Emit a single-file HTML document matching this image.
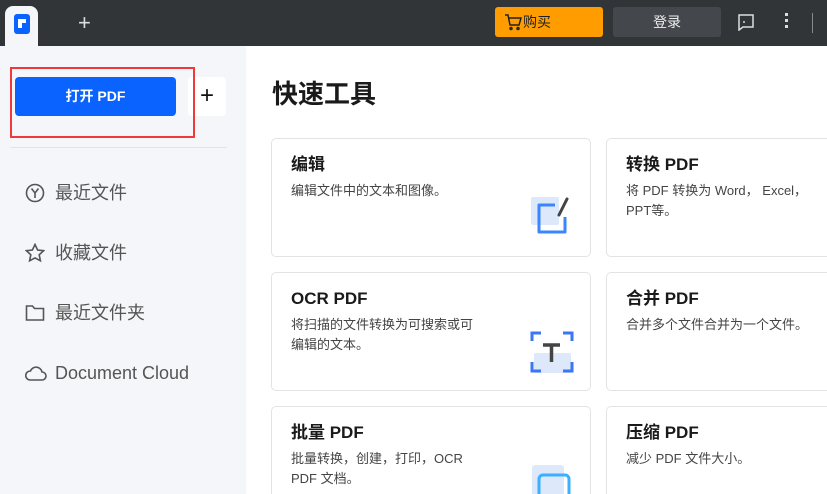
<!DOCTYPE html>
<html style="overflow:hidden;width:827px;height:494px"><head><meta charset="utf-8"><style>
*{margin:0;padding:0;box-sizing:border-box}
body{width:827px;height:494px;overflow:hidden;font-family:"Liberation Sans","Noto Sans CJK SC",sans-serif;background:#fff;position:relative}
.top{position:absolute;left:0;top:0;width:827px;height:46px;background:#323538}
.tab{position:absolute;left:5px;top:6px;width:33px;height:40px;background:#f5f6fa;border-radius:8px 8px 0 0}
.logo{position:absolute;left:14px;top:14px;width:16px;height:20px;background:#0a63ff;border-radius:3px}
.logo:after{content:"";position:absolute;left:4px;top:5px;width:8px;height:4px;background:#fff}
.logo:before{content:"";position:absolute;left:4px;top:5px;width:4px;height:9px;background:#fff}
.side{position:absolute;left:0;top:46px;width:246px;height:448px;background:#f5f6fa}
.btn{position:absolute;left:15px;top:77px;width:161px;height:39px;background:#0a63ff;border-radius:4px;color:#fff;font-size:14px;font-weight:bold;text-align:center;line-height:39px}
.plus{position:absolute;left:188px;top:77px;width:38px;height:39px;background:#fff;border-radius:4px;font-size:24px;text-align:center;line-height:38px;color:#111}
.red{position:absolute;left:10px;top:67px;width:185px;height:71px;border:2px solid #f03a3a}
.hr{position:absolute;left:10px;top:147px;width:217px;height:1px;background:#e2e3e8}
.item{position:absolute;left:55px;font-size:18px;line-height:22px;color:#555}
.ic{position:absolute;left:25px}
h1{position:absolute;left:272px;top:78px;font-size:26px;line-height:32px;font-weight:bold;color:#1a1a1a}
.card{position:absolute;width:320px;height:119px;border:1px solid #e3e3e6;border-radius:5px;background:#fff;overflow:hidden}
.card.b{height:88px;border-bottom:none;border-radius:5px 5px 0 0}
.card b{position:absolute;left:19px;top:14px;font-size:17px;line-height:24px;color:#1a1a1a}
.card p{position:absolute;left:19px;top:42px;font-size:13px;color:#444;line-height:20px;width:215px}
</style></head><body>
<div class="top"></div>
<div class="tab"></div><div class="logo"></div>
<div style="position:absolute;left:78px;top:10px;color:#ddd;font-size:22px">+</div>
<div style="position:absolute;left:495px;top:7px;width:108px;height:30px;background:#ff9d00;border-radius:3px;font-size:14px;color:#222;line-height:30px;padding-left:28px">
<svg style="position:absolute;left:9px;top:6px" width="18" height="18" viewBox="0 0 18 18" fill="none" stroke="#222" stroke-width="1.5"><path d="M1 2h3l2 10h9l2-7H5"/><circle cx="7" cy="15.5" r="1"/><circle cx="14" cy="15.5" r="1"/></svg>购买</div>
<div style="position:absolute;left:613px;top:7px;width:108px;height:30px;background:#44474c;border-radius:3px;font-size:14px;color:#eee;line-height:30px;text-align:center">登录</div>
<svg style="position:absolute;left:737px;top:13px" width="18" height="18" viewBox="0 0 18 18" fill="none" stroke="#ddd" stroke-width="1.5"><path d="M2 2h14v12H6l-4 3z"/><path d="M6 9h2"/></svg>
<div style="position:absolute;left:785px;top:13px;width:3px;height:3px;background:#ddd;box-shadow:0 6px #ddd,0 12px #ddd"></div>
<div style="position:absolute;left:812px;top:13px;width:1px;height:20px;background:#888"></div>
<div class="side"></div>
<div class="btn">打开 PDF</div><div class="plus">+</div><div class="red"></div><div class="hr"></div>
<svg class="ic" style="top:183px" width="20" height="20" viewBox="0 0 20 20" fill="none" stroke="#555" stroke-width="1.6"><circle cx="10" cy="10" r="8.5"/><path d="M6.5 5.5l3.5 4.5 3.5-4.5M10 10v5"/></svg>
<div class="item" style="top:182px">最近文件</div>
<svg class="ic" style="top:243px" width="20" height="20" viewBox="0 0 20 20" fill="none" stroke="#555" stroke-width="1.6"><path d="M10 1.5l2.6 5.5 6 .7-4.4 4.1 1.2 6L10 14.9 4.6 17.8l1.2-6L1.4 7.7l6-.7z"/></svg>
<div class="item" style="top:242px">收藏文件</div>
<svg class="ic" style="top:303px" width="20" height="20" viewBox="0 0 20 20" fill="none" stroke="#555" stroke-width="1.6"><path d="M1.5 3h6l2 2.5h9v11.5h-17z"/></svg>
<div class="item" style="top:302px">最近文件夹</div>
<svg class="ic" style="top:364px" width="22" height="18" viewBox="0 0 22 18" fill="none" stroke="#555" stroke-width="1.6"><path d="M5 16h12a4 4 0 0 0 0-8 6 6 0 0 0-11.5-1A4.5 4.5 0 0 0 5 16z"/></svg>
<div class="item" style="top:362px">Document Cloud</div>
<h1>快速工具</h1>
<div class="card" style="left:271px;top:138px"><b>编辑</b><p>编辑文件中的文本和图像。</p>
<svg style="position:absolute;left:257px;top:56px" width="46" height="46" viewBox="0 0 46 46"><rect x="2" y="2" width="28" height="28" rx="2" fill="#dde8fb"/><path d="M26 10H10v27h26V22" fill="none" stroke="#3a86ff" stroke-width="3" stroke-linejoin="round"/><path d="M30 20l8-16" stroke="#444" stroke-width="3" stroke-linecap="round"/></svg></div>
<div class="card" style="left:606px;top:138px"><b>转换 PDF</b><p style="width:205px">将 PDF 转换为 Word， Excel， PPT等。</p></div>
<div class="card" style="left:271px;top:272px"><b>OCR PDF</b><p style="width:250px">将扫描的文件转换为可搜索或可<br>编辑的文本。</p>
<svg style="position:absolute;left:257px;top:56px" width="46" height="46" viewBox="0 0 46 46"><rect x="5" y="24" width="37" height="20" rx="2" fill="#dde8fb"/><path d="M3 12V4h9M34 4h9v8M3 33v9h9M34 42h9v-9" fill="none" stroke="#3a76f5" stroke-width="3"/><path d="M14 16h17M22.5 16v17" stroke="#444" stroke-width="3.5"/></svg></div>
<div class="card" style="left:606px;top:272px"><b>合并 PDF</b><p style="width:260px">合并多个文件合并为一个文件。</p></div>
<div class="card b" style="left:271px;top:406px"><b>批量 PDF</b><p style="width:200px">批量转换，创建，打印，OCR PDF 文档。</p>
<svg style="position:absolute;left:257px;top:56px" width="46" height="40" viewBox="0 0 46 40"><rect x="3" y="2" width="32" height="34" rx="3" fill="#dde8fb"/><path d="M10 36V16a4 4 0 0 1 4-4h22a4 4 0 0 1 4 4v20" fill="none" stroke="#3ab0ff" stroke-width="3"/></svg></div>
<div class="card b" style="left:606px;top:406px"><b>压缩 PDF</b><p style="width:260px">减少 PDF 文件大小。</p></div>
</body></html>
